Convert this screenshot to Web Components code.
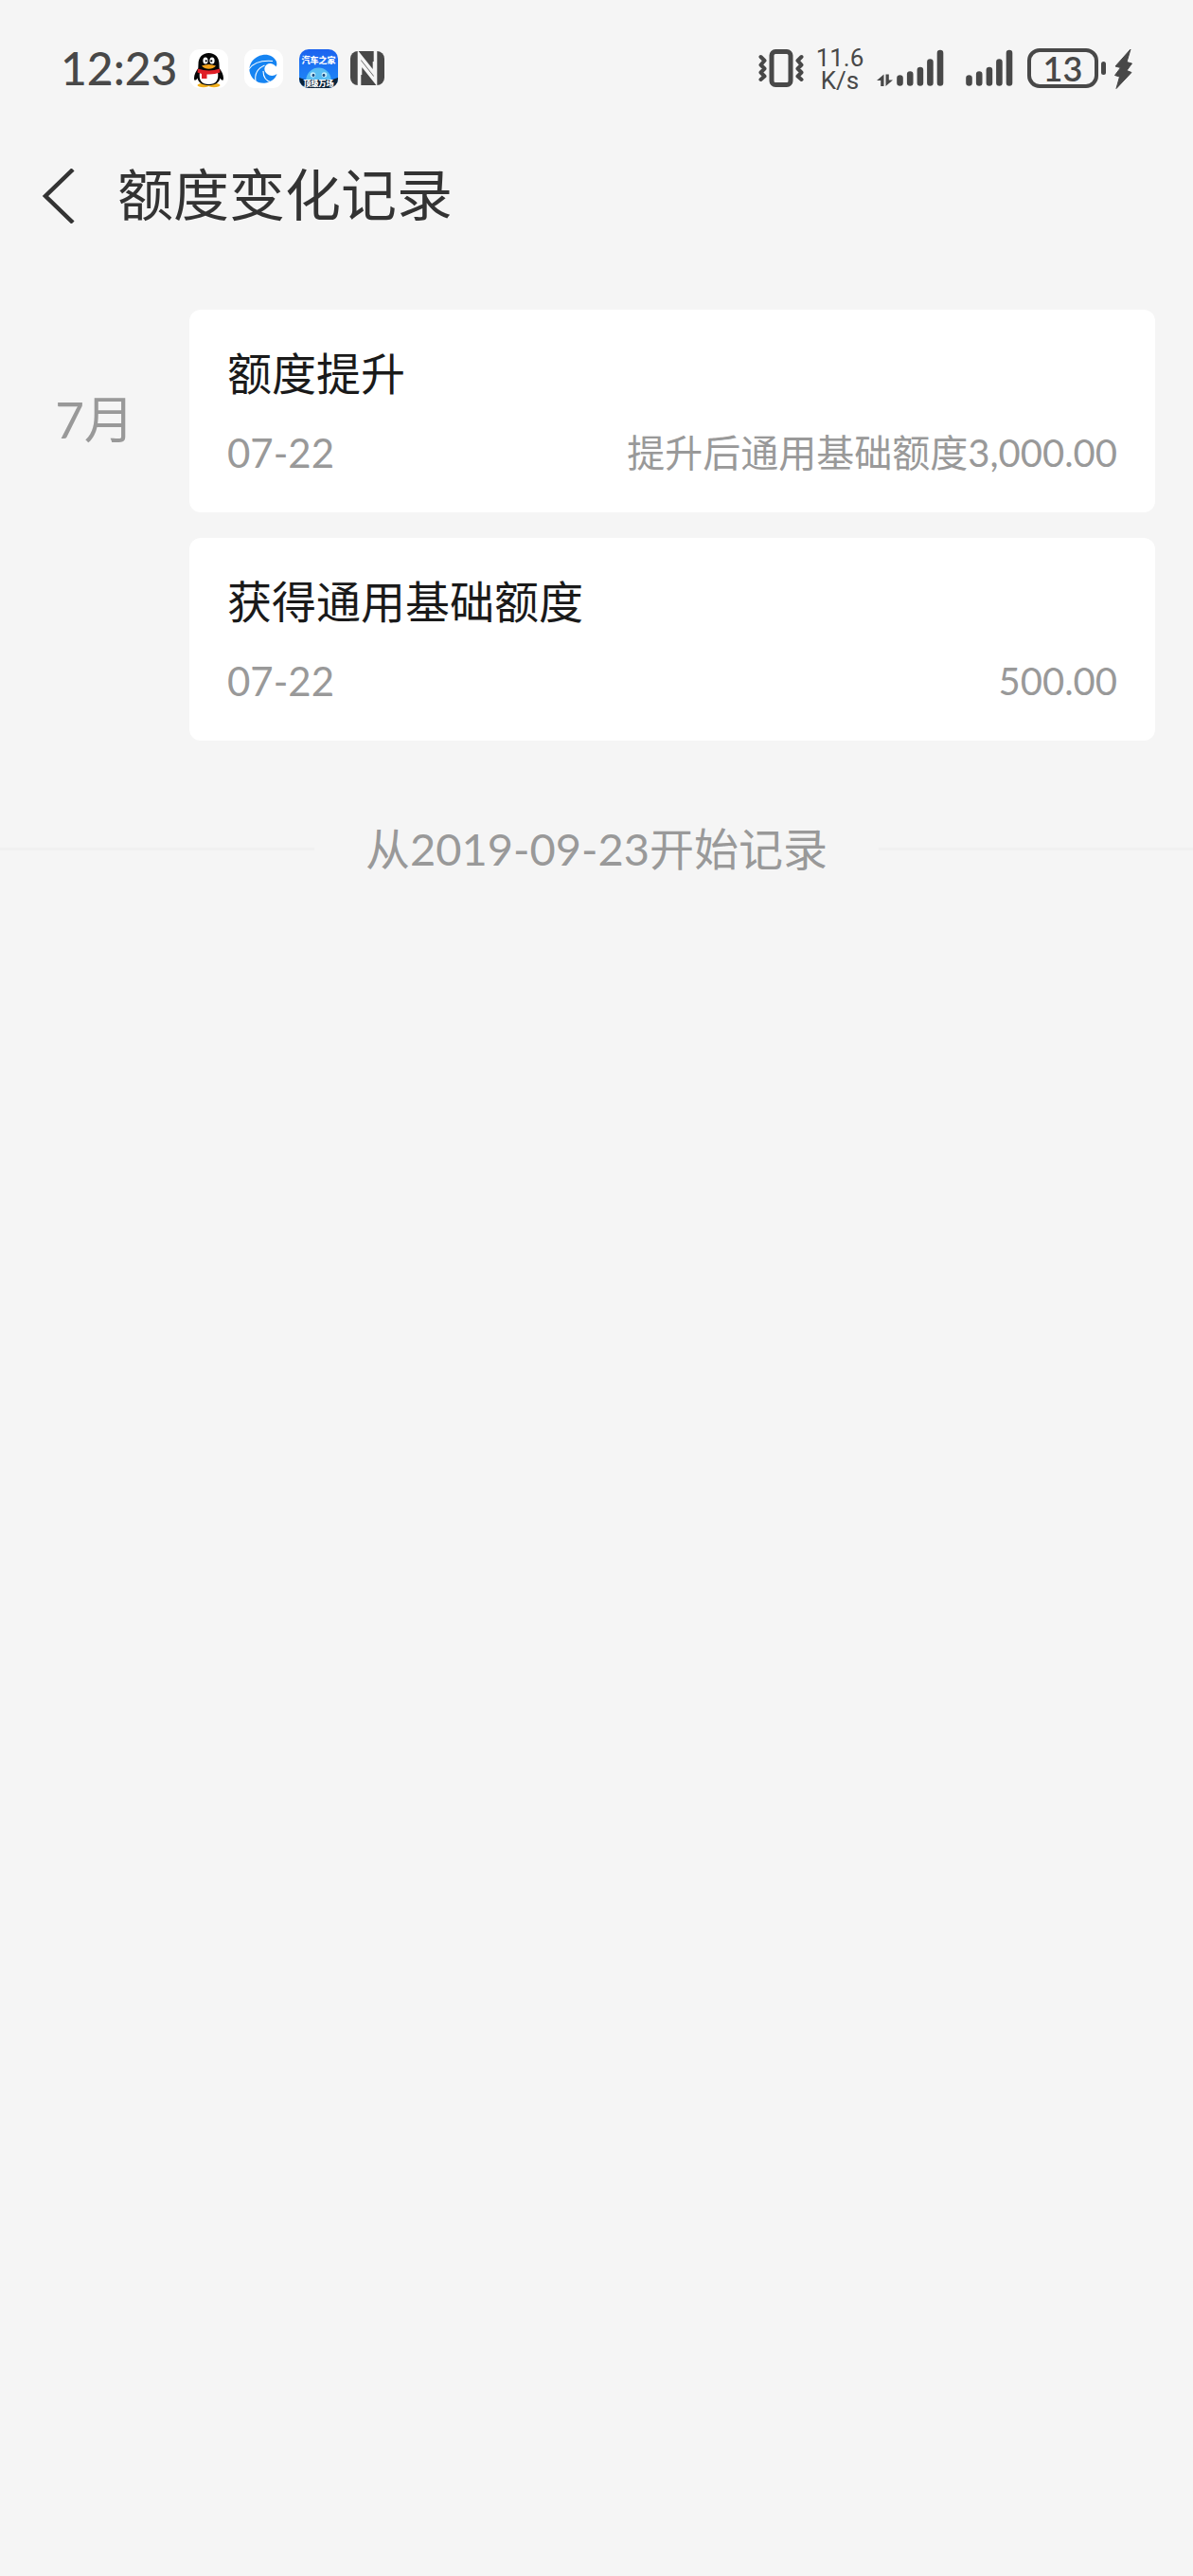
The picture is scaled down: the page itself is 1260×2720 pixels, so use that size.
<!DOCTYPE html>
<html lang="zh-CN">
<head>
<meta charset="UTF-8">
<meta name="viewport" content="width=device-width, initial-scale=1">
<title>额度变化记录</title>
<style>
  body {
    margin: 0;
    background: #f5f5f5;
    color: #333;
    font-family: Lato, "Noto Sans CJK SC", sans-serif;
  }

  main {
    display: flex;
    flex-direction: column;
    gap: 78px;
    padding-top: 57px;
  }
</style>
</head>
<body>
  <status-bar time="12:23" speed="11.6" battery="13"></status-bar>
  <page-header>额度变化记录</page-header>
  <main>
    <month-group month="7月">
      <record-card date="07-22" value="提升后通用基础额度3,000.00">额度提升</record-card>
      <record-card date="07-22" value="500.00">获得通用基础额度</record-card>
    </month-group>
    <list-end>从2019-09-23开始记录</list-end>
  </main>

<script>
class SignalBars extends HTMLElement {
  constructor() {
    super();
    this.attachShadow({ mode: "open" });
    this.shadowRoot.innerHTML = `
      <style>
        :host { display: block; }
        svg { display: block; }
      </style>
      <svg width="50" height="42" viewBox="0 0 50 42" stroke="#484848" stroke-width="6.6" stroke-linecap="round">
        <path d="M3.5 31.6V36.5M14.2 27.6V36.5M24.9 23V36.5M35.4 14.6V36.5M46 5V36.5"/>
      </svg>
    `;
  }
}

class StatusBar extends HTMLElement {
  constructor() {
    super();
    this.attachShadow({ mode: "open" });
  }

  connectedCallback() {
    this.shadowRoot.innerHTML = `
      <style>
        :host {
          display: flex;
          justify-content: space-between;
          align-items: center;
          height: 144px;
          padding: 0 64px;
          color: #484848;
        }
        .side { display: flex; align-items: center; }
        svg { display: block; }
        .time { font-size: 48px; line-height: 56px; font-weight: 500; }
        .apps { display: flex; align-items: center; gap: 17px; margin-left: 13px; }
        .apps text { font-family: "Noto Sans CJK SC", sans-serif; font-weight: 900; }
        .nfc { margin-left: -4px; }
        .speed {
          display: flex;
          flex-direction: column;
          width: 52px;
          margin: 0 13px 0 12px;
          padding-top: 2px;
          font: 26px/24px Roboto, sans-serif;
          text-align: center;
        }
        .arrows { margin-right: 4px; }
        .second { margin-left: 23px; }
        .battery {
          box-sizing: border-box;
          width: 75px;
          height: 42px;
          margin-left: 15px;
          border: 4px solid #484848;
          border-radius: 13px;
          font-size: 36px;
          line-height: 34px;
          font-weight: 600;
          text-align: center;
        }
        .nub { width: 5px; height: 14px; margin: 0 9px 0 3px; border-radius: 3px; background: #484848; }
      </style>
      <div class="side">
        <span class="time">${this.getAttribute("time")}</span>
        <div class="apps">
          <svg width="41" height="41" viewBox="0 0 41 41">
            <rect width="41" height="41" rx="11" fill="#fff"/>
            <ellipse cx="15" cy="38" rx="6.5" ry="2.2" fill="#f2b01e"/>
            <ellipse cx="26" cy="38" rx="6.5" ry="2.2" fill="#f2b01e"/>
            <path d="M20.500 4C13.500 4 9.500 9 9.500 15.500L9.300 20C7 23 5 27 5 30.500C5 34 7 33 8.500 30.500C10 36 14 38 20.500 38S31 36 32.500 30.500C34 33 36 34 36 30.500C36 27 34 23 31.700 20L31.500 15.500C31.500 9 27.500 4 20.500 4Z" fill="#060606"/>
            <path d="M11 24Q20.500 28 30 24Q32 37 20.500 37Q9 37 11 24Z" fill="#fff"/>
            <ellipse cx="17" cy="12" rx="2.600" ry="3.600" fill="#fff"/>
            <ellipse cx="24" cy="12" rx="2.600" ry="3.600" fill="#fff"/>
            <circle cx="17.700" cy="12.300" r="1.100"/>
            <circle cx="23.300" cy="12.300" r="1.100"/>
            <path d="M13 17.500Q20.500 14.500 28 17.500Q25 20.700 20.500 20.700T13 17.500Z" fill="#f5a31a"/>
            <path d="M9 20.500Q20.500 24.500 32 20.500L32.500 24.500Q26 27 18.500 26.500V31H13V26L8.500 24.500Z" fill="#e01f26"/>
          </svg>
          <svg width="41" height="41" viewBox="0 0 41 41">
            <rect width="41" height="41" rx="11" fill="#fff"/>
            <path d="M34 13C31 7.500 25.500 5 19.500 6C10.500 7.500 4.500 15 5.500 23C7 32 15 37 23 35.500C28.500 34.500 33 31 34.500 26C31.500 28.500 27 28.500 24 26C20.500 23 20.500 18.500 24 16C27 14 31.500 15.500 33.500 18.500Q35 16 34 13Z" fill="#1684f2"/>
            <path d="M5 21Q12 11 30 12.500M12 34Q10 22 21.500 17M29 35Q20 33 20 23" fill="none" stroke="#fff" stroke-width="1.100"/>
          </svg>
          <svg width="41" height="41" viewBox="0 0 41 41">
            <defs>
              <linearGradient id="sky" x1="0" y1="0" x2="0" y2="1">
                <stop offset="0" stop-color="#1b62ef"/>
                <stop offset="1" stop-color="#1f8cf8"/>
              </linearGradient>
              <clipPath id="tile"><rect width="41" height="41" rx="10"/></clipPath>
            </defs>
            <g clip-path="url(#tile)">
              <rect width="41" height="41" fill="url(#sky)"/>
              <path d="M7 33C8 24 14 19.500 20.500 19.500S33 24 34 33Z" fill="#58bdf2"/>
              <circle cx="14.500" cy="27" r="2.800" fill="#c5ecfb"/>
              <circle cx="26.500" cy="27" r="2.800" fill="#c5ecfb"/>
              <circle cx="15" cy="27.500" r="1.400" fill="#16457c"/>
              <circle cx="26" cy="27.500" r="1.400" fill="#16457c"/>
              <path d="M0 30L6 32H35L41 30V41H0Z" fill="#0b2338"/>
              <text x="20.500" y="15" font-size="9" fill="#fff" text-anchor="middle">汽车之家</text>
              <text x="20.500" y="39" font-size="8" fill="#fff" text-anchor="middle">顶级万场</text>
            </g>
          </svg>
          <svg class="nfc" width="36" height="36" viewBox="0 0 36 36">
            <rect width="36" height="36" rx="8" fill="#484848"/>
            <path d="M9.500 36V4L25.500 24V11M26.500 0V32L10.500 12V25" fill="none" stroke="#f5f5f5" stroke-width="3.600"/>
          </svg>
        </div>
      </div>
      <div class="side">
        <svg width="48" height="42" viewBox="0 0 48 42" fill="none" stroke="#484848" stroke-linejoin="round" stroke-linecap="round">
          <rect x="14" y="3.500" width="20" height="35" rx="4" stroke-width="5"/>
          <path d="M2.500 9L6.500 13L2.500 17.500L6.500 21.500L2.500 25.500L6.500 29.500L2.500 33M45.500 9L41.500 13L45.500 17.500L41.500 21.500L45.500 25.500L41.500 29.500L45.500 33" stroke-width="4"/>
        </svg>
        <div class="speed">
          <span>${this.getAttribute("speed")}</span>
          <span>K/s</span>
        </div>
        <svg class="arrows" width="17" height="42" viewBox="0 0 17 42" fill="#484848">
          <path d="M0 34L7.500 27.500V40H4.200V34ZM17 33.500L9.500 40V27.500H12.800V33.500Z"/>
        </svg>
        <signal-bars></signal-bars>
        <signal-bars class="second"></signal-bars>
        <div class="battery">${this.getAttribute("battery")}</div>
        <div class="nub"></div>
        <svg width="19" height="43" viewBox="0 0 19 43">
          <path d="M17 1L1 19L6.500 20.500L.5 28.500L5.500 30L2 42.500L18 25.500L13 23.500L18.500 16L13 14.500Z" fill="#484848" stroke="#484848" stroke-linejoin="round"/>
        </svg>
      </div>
    `;
  }
}

class PageHeader extends HTMLElement {
  constructor() {
    super();
    this.attachShadow({ mode: "open" });
    this.shadowRoot.innerHTML = `
      <style>
        :host {
          display: flex;
          align-items: center;
          height: 126px;
          padding-left: 36px;
        }
        button {
          width: 88px;
          height: 90px;
          padding: 0 8px;
          border: 0;
          background: none;
          color: inherit;
          cursor: pointer;
        }
        svg { display: block; }
        h1 { margin: 0; padding-bottom: 2px; font-size: 59px; line-height: 72px; font-weight: 400; }
      </style>
      <button type="button" aria-label="返回">
        <svg width="36" height="58" viewBox="0 0 36 58" fill="none" stroke="currentColor" stroke-width="4.500">
          <path d="M33 1L4 29L33 57"/>
        </svg>
      </button>
      <h1><slot></slot></h1>
    `;
    this.shadowRoot.querySelector("button").addEventListener("click", () => history.back());
  }
}

class MonthGroup extends HTMLElement {
  constructor() {
    super();
    this.attachShadow({ mode: "open" });
  }

  connectedCallback() {
    this.shadowRoot.innerHTML = `
      <style>
        :host {
          display: grid;
          grid-template-columns: 200px 1fr;
          padding-right: 40px;
        }
        h2 {
          margin: 0;
          padding-top: 84px;
          color: #999;
          font-size: 53px;
          line-height: 64px;
          font-weight: 400;
          text-align: center;
        }
        .cards { display: flex; flex-direction: column; gap: 27px; }
      </style>
      <h2>${this.getAttribute("month")}</h2>
      <div class="cards"><slot></slot></div>
    `;
  }
}

class RecordCard extends HTMLElement {
  constructor() {
    super();
    this.attachShadow({ mode: "open" });
  }

  connectedCallback() {
    this.shadowRoot.innerHTML = `
      <style>
        :host {
          display: flex;
          flex-direction: column;
          gap: 33px;
          padding: 40px 40px 39px;
          border-radius: 12px;
          background: #fff;
        }
        h3 {
          margin: 0;
          color: #1a1a1a;
          font-size: 47px;
          line-height: 54px;
          font-weight: 400;
        }
        .detail {
          display: flex;
          justify-content: space-between;
          color: #999;
          font-size: 40px;
          line-height: 48px;
        }
        time { font-size: 42px; }
      </style>
      <h3><slot></slot></h3>
      <div class="detail">
        <time>${this.getAttribute("date")}</time>
        <span>${this.getAttribute("value")}</span>
      </div>
    `;
  }
}

class ListEnd extends HTMLElement {
  constructor() {
    super();
    this.attachShadow({ mode: "open" });
    this.shadowRoot.innerHTML = `
      <style>
        :host {
          display: flex;
          align-items: center;
          gap: 54px;
          color: #999;
          font-size: 47px;
          line-height: 72px;
        }
        :host::before, :host::after {
          content: "";
          flex: 1;
          height: 3px;
          background: #f0f0f0;
        }
      </style>
      <slot></slot>
    `;
  }
}

customElements.define("signal-bars", SignalBars);
customElements.define("status-bar", StatusBar);
customElements.define("page-header", PageHeader);
customElements.define("month-group", MonthGroup);
customElements.define("record-card", RecordCard);
customElements.define("list-end", ListEnd);
</script>
</body>
</html>
